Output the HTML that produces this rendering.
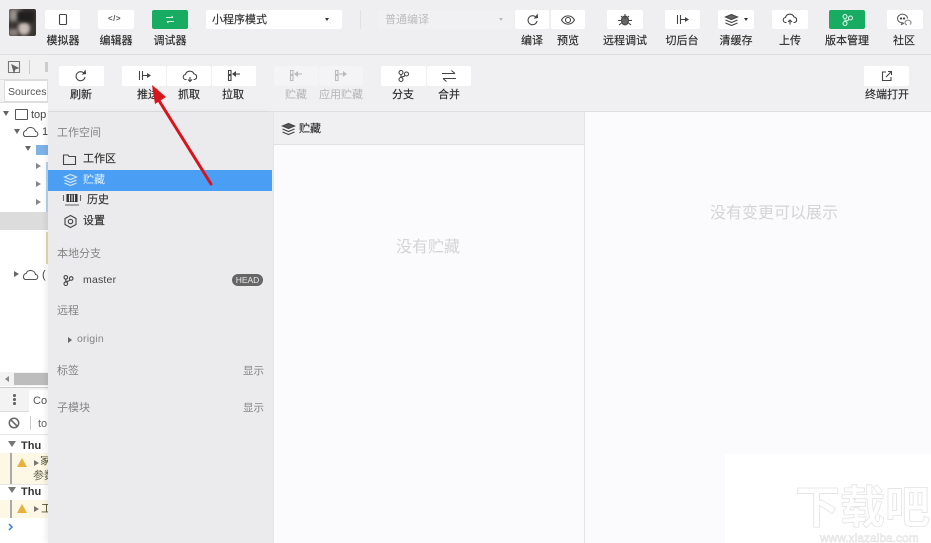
<!DOCTYPE html>
<html><head><meta charset="utf-8">
<style>
html,body{margin:0;padding:0;background:#fff}
#p{width:931px;height:543px;overflow:hidden;position:relative;background:#fff;font-family:"Liberation Sans","Noto Sans CJK SC",sans-serif;color:#333;filter:blur(.35px)}
.a{position:absolute}
.t{position:absolute;white-space:nowrap;line-height:14px;font-size:11px;text-align:center;transform:translateX(-50%);color:#2c2c2c;-webkit-text-stroke:.15px #2c2c2c}
.l{position:absolute;white-space:nowrap;line-height:14px;font-size:11px}
.b{position:absolute;background:#fff;border-radius:2px}
svg{position:absolute;overflow:visible}
svg *{fill:none;stroke:#444;stroke-width:1.1}
.g{color:#858585}
.d{-webkit-text-stroke:.15px #333}
</style></head><body><div id="p">
<!-- left devtools -->
<div class="a" style="left:0;top:54px;width:48px;height:489px;background:#fff"></div>
<div class="a" style="left:0;top:55px;width:48px;height:24px;background:#f1f1f2;border-bottom:1px solid #ddd"></div>
<svg style="left:8px;top:61px" width="12" height="12"><path d="M.5 .5h11v11h-11z" style="stroke:#777"/><path d="M4 4l6 3-3 1-1 3z" style="fill:#666;stroke:#666"/></svg>
<div class="a" style="left:29px;top:60px;width:1px;height:14px;background:#ccc"></div>
<div class="a" style="left:45px;top:62px;width:3px;height:10px;background:#ccc"></div>
<div class="a" style="left:0;top:80px;width:48px;height:22px;background:#f3f3f3;border-bottom:1px solid #ddd"></div>
<div class="a" style="left:4px;top:80px;width:44px;height:22px;background:#fff;border:1px solid #ddd;box-sizing:border-box"></div>
<div class="l" style="left:8px;top:85px;color:#555;font-size:10.5px">Sources</div>
<div class="a" style="left:3px;top:111px;border-left:3px solid transparent;border-right:3px solid transparent;border-top:5px solid #666"></div>
<div class="a" style="left:15px;top:109px;width:11px;height:9px;border:1.2px solid #555;border-radius:1px"></div>
<div class="l" style="left:31px;top:108px;color:#444">top</div>
<div class="a" style="left:14px;top:129px;border-left:3px solid transparent;border-right:3px solid transparent;border-top:5px solid #666"></div>
<svg style="left:22px;top:126px" width="16" height="11"><path d="M3 10.5h10a2.5 2.5 0 0 0 .5-5a5 5 0 0 0-9.500-1a3.300 3.300 0 0 0-1 6z" style="stroke:#555"/></svg>
<div class="l" style="left:42px;top:125px;color:#444">1</div>
<div class="a" style="left:25px;top:146px;border-left:3px solid transparent;border-right:3px solid transparent;border-top:5px solid #666"></div>
<div class="a" style="left:36px;top:145px;width:12px;height:10px;background:#7fb2e5"></div>
<div class="a" style="left:36px;top:163px;border-top:3px solid transparent;border-bottom:3px solid transparent;border-left:5px solid #888"></div>
<div class="a" style="left:36px;top:181px;border-top:3px solid transparent;border-bottom:3px solid transparent;border-left:5px solid #888"></div>
<div class="a" style="left:36px;top:199px;border-top:3px solid transparent;border-bottom:3px solid transparent;border-left:5px solid #888"></div>
<div class="a" style="left:46px;top:162px;width:2px;height:50px;background:#b9d3ee"></div>
<div class="a" style="left:0;top:212px;width:48px;height:18px;background:#dcdcdc"></div>
<div class="a" style="left:46px;top:232px;width:2px;height:32px;background:#e8d9a8"></div>
<div class="a" style="left:14px;top:271px;border-top:3px solid transparent;border-bottom:3px solid transparent;border-left:5px solid #666"></div>
<svg style="left:22px;top:269px" width="16" height="11"><path d="M3 10.500h10a2.500 2.500 0 0 0 .5-5a5 5 0 0 0-9.500-1a3.300 3.300 0 0 0-1 6z" style="stroke:#555"/></svg>
<div class="l" style="left:42px;top:268px;color:#444">(</div>
<div class="a" style="left:0;top:372px;width:48px;height:14px;background:#f3f3f3"></div>
<div class="a" style="left:5px;top:376px;border-top:3px solid transparent;border-bottom:3px solid transparent;border-right:4px solid #888"></div>
<div class="a" style="left:14px;top:373px;width:34px;height:12px;background:#bdbdbd"></div>
<div class="a" style="left:0;top:387px;width:48px;height:25px;background:#f3f3f3;border-top:1px solid #ccc;border-bottom:1px solid #ddd;box-sizing:border-box"></div>
<div class="a" style="left:13px;top:394px;width:2.500px;height:2.500px;background:#666;box-shadow:0 4px #666,0 8px #666;border-radius:50%"></div>
<div class="a" style="left:29px;top:390px;width:19px;height:22px;background:#fff"></div>
<div class="l" style="left:33px;top:394px;color:#555">Co</div>
<svg style="left:8px;top:417px" width="12" height="12"><circle cx="6" cy="6" r="4.700" style="stroke:#666;stroke-width:1.500"/><path d="M2.700 2.700l6.600 6.600" style="stroke:#666;stroke-width:1.500"/></svg>
<div class="a" style="left:30px;top:416px;width:1px;height:14px;background:#ccc"></div>
<div class="l" style="left:38px;top:417px;color:#666">to</div>
<div class="a" style="left:0;top:434px;width:48px;height:1px;background:#e6e6e6"></div>
<div class="a" style="left:8px;top:441px;border-left:4px solid transparent;border-right:4px solid transparent;border-top:6px solid #777"></div>
<div class="l" style="left:21px;top:439px;font-weight:bold;color:#333">Thu</div>
<div class="a" style="left:0;top:453px;width:48px;height:31px;background:#fdf8e6"></div>
<div class="a" style="left:10px;top:453px;width:1.500px;height:31px;background:#aaa"></div>
<div class="a" style="left:17px;top:458px;border-left:5px solid transparent;border-right:5px solid transparent;border-bottom:9px solid #e6b23c"></div>
<div class="a" style="left:34px;top:460px;border-top:3px solid transparent;border-bottom:3px solid transparent;border-left:5px solid #777"></div>
<div class="a" style="left:40px;top:456px;width:8px;height:11px;overflow:hidden"><div class="l" style="left:0;top:-2px;color:#553">家</div></div>
<div class="l" style="left:33px;top:469px;color:#665;font-size:11px;width:15px;overflow:hidden">参数</div>
<div class="a" style="left:0;top:484px;width:48px;height:1px;background:#e6e6e6"></div>
<div class="a" style="left:8px;top:487px;border-left:4px solid transparent;border-right:4px solid transparent;border-top:6px solid #777"></div>
<div class="l" style="left:21px;top:485px;font-weight:bold;color:#333">Thu</div>
<div class="a" style="left:0;top:500px;width:48px;height:18px;background:#fdf8e6"></div>
<div class="a" style="left:10px;top:500px;width:1.500px;height:18px;background:#aaa"></div>
<div class="a" style="left:17px;top:504px;border-left:5px solid transparent;border-right:5px solid transparent;border-bottom:9px solid #e6b23c"></div>
<div class="a" style="left:34px;top:506px;border-top:3px solid transparent;border-bottom:3px solid transparent;border-left:5px solid #777"></div>
<div class="l" style="left:41px;top:502px;color:#553;width:7px;overflow:hidden">工</div>
<svg style="left:8px;top:523px" width="6" height="8"><path d="M1 1l3 3-3 3" style="stroke:#3b7fd4;stroke-width:1.500"/></svg>

<!-- top bar -->
<div class="a" style="left:0;top:0;width:931px;height:54px;background:#efeef0;border-bottom:1px solid #dedde0"></div>
<div class="a" style="left:9px;top:9px;width:27px;height:27px;border-radius:2px;overflow:hidden;background:#3a3634">
  <div class="a" style="left:0;top:0;width:12px;height:12px;background:#9a9490;filter:blur(2px)"></div>
  <div class="a" style="left:9px;top:13px;width:12px;height:13px;background:#c8bcb6;border-radius:50%;filter:blur(1.500px)"></div>
  <div class="a" style="left:0;top:20px;width:9px;height:7px;background:#8a8280;filter:blur(1.500px)"></div>
  <div class="a" style="left:8px;top:2px;width:17px;height:11px;background:#211f1e;filter:blur(1.500px)"></div>
</div>

<div class="b" style="left:45px;top:10px;width:35px;height:19px"></div>
<svg style="left:59px;top:14px" width="8" height="11"><rect x=".5" y=".5" width="7" height="10" rx="1"/></svg>
<div class="t" style="left:63px;top:34px">模拟器</div>
<div class="b" style="left:98px;top:10px;width:36px;height:19px"></div>
<div class="l" style="left:108px;top:12px;font-size:8px;font-weight:bold;color:#555;letter-spacing:.5px">&lt;/&gt;</div>
<div class="t" style="left:116px;top:34px">编辑器</div>
<div class="b" style="left:152px;top:10px;width:36px;height:19px;background:#18ac62"></div>
<svg style="left:166px;top:16px" width="8" height="7"><path d="M0 1.500h7M5.500 0l1.500 1.500M8 5.500h-7M2.500 7l-1.500-1.500" style="stroke:#cfeedd"/></svg>
<div class="t" style="left:170px;top:34px">调试器</div>

<div class="b" style="left:206px;top:10px;width:136px;height:19px"></div>
<div class="l d" style="left:212px;top:13px;color:#333">小程序模式</div>
<div class="a" style="left:325px;top:18px;border-left:2.500px solid transparent;border-right:2.500px solid transparent;border-top:3px solid #333"></div>
<div class="a" style="left:360px;top:10px;width:1px;height:19px;background:#e2e1e4"></div>
<div class="b" style="left:378px;top:10px;width:136px;height:19px;background:#f1f0f2"></div>
<div class="l" style="left:385px;top:13px;color:#bcbcbe">普通编译</div>
<div class="a" style="left:499px;top:18px;border-left:2.500px solid transparent;border-right:2.500px solid transparent;border-top:3px solid #bbb"></div>

<div class="b" style="left:515px;top:10px;width:34px;height:19px"></div>
<svg style="left:527px;top:14px" width="11" height="11"><path d="M9.500 4a4.500 4.500 0 1 0 .5 3"/><path d="M8 4l2.500-.5-.3-2.500z" style="fill:#444;stroke:#444"/></svg>
<div class="t" style="left:532px;top:34px">编译</div>
<div class="b" style="left:551px;top:10px;width:34px;height:19px"></div>
<svg style="left:561px;top:15px" width="14" height="10"><path d="M.5 5c3-5.500 10-5.500 13 0c-3 5.500-10 5.500-13 0z"/><circle cx="7" cy="5" r="2.500"/></svg>
<div class="t" style="left:568px;top:34px">预览</div>

<div class="b" style="left:607px;top:10px;width:36px;height:19px"></div>
<svg style="left:618px;top:13px" width="14" height="13"><ellipse cx="7" cy="7.500" rx="3.500" ry="4.500" style="fill:#666"/><path d="M3 3l2 2M11 3l-2 2M0 7.500h3.500M10.500 7.500h3.500M1 12l2.500-2M13 12l-2.500-2M7 1v5"/></svg>
<div class="t" style="left:625px;top:34px">远程调试</div>
<div class="b" style="left:665px;top:10px;width:35px;height:19px"></div>
<svg style="left:677px;top:15px" width="12" height="9"><path d="M.5 0v9M3.500 0v9M3.500 4.500h5"/><path d="M8 2l4 2.500-4 2.500z" style="fill:#444;stroke:none"/></svg>
<div class="t" style="left:682px;top:34px">切后台</div>
<div class="b" style="left:718px;top:10px;width:36px;height:19px"></div>
<svg style="left:725px;top:14px" width="13" height="12"><path d="M6.500 .5l6 2.500-6 2.500-6-2.500z" style="fill:#666"/><path d="M.5 6l6 2.500 6-2.500M.5 9l6 2.500 6-2.500"/></svg>
<div class="a" style="left:744px;top:18px;border-left:2.500px solid transparent;border-right:2.500px solid transparent;border-top:3px solid #333"></div>
<div class="t" style="left:736px;top:34px">清缓存</div>
<div class="b" style="left:772px;top:10px;width:36px;height:19px"></div>
<svg style="left:783px;top:14px" width="14" height="11"><path d="M3.500 8.500h-.5a2.500 2.500 0 0 1-.5-5a4.500 4.500 0 0 1 8.500-.5a2.800 2.800 0 0 1 .5 5.500h-1"/><path d="M7 10.500v-4M5 8l2-2 2 2"/></svg>
<div class="t" style="left:790px;top:34px">上传</div>
<div class="b" style="left:829px;top:10px;width:36px;height:19px;background:#18ac62"></div>
<svg style="left:842px;top:14px" width="11" height="12"><circle cx="3" cy="2.500" r="2" style="stroke:#d8f3e4"/><circle cx="8.500" cy="4" r="2" style="stroke:#d8f3e4"/><circle cx="3" cy="9.500" r="2" style="stroke:#d8f3e4"/><path d="M3 4.500v3M3 7c3 0 3.500-1 4-2" style="stroke:#d8f3e4"/></svg>
<div class="t" style="left:847px;top:34px">版本管理</div>
<div class="b" style="left:887px;top:10px;width:36px;height:19px"></div>
<svg style="left:897px;top:14px" width="16" height="12"><path d="M10.500 4.500a5 4.300 0 1 0-5 4.300l-1.500 2 3-1.500" style="stroke:#666"/><circle cx="4" cy="4.500" r=".6"/><circle cx="7" cy="4.500" r=".6"/><path d="M10 11a3 2.500 0 1 1 3-.5" style="stroke:#888"/></svg>
<div class="t" style="left:904px;top:34px">社区</div>

<!-- second toolbar -->
<div class="a" style="left:48px;top:55px;width:883px;height:56px;background:#f0eff1;border-bottom:1px solid #e0dfe2"></div>
<div class="b" style="left:59px;top:66px;width:45px;height:20px"></div>
<svg style="left:75px;top:70px" width="11" height="11"><path d="M9.500 4a4.500 4.500 0 1 0 .5 3"/><path d="M8 4l2.500-.5-.3-2.500z" style="fill:#444;stroke:#444"/></svg>
<div class="t" style="left:81px;top:88px">刷新</div>
<div class="b" style="left:122px;top:66px;width:44px;height:20px"></div>
<svg style="left:139px;top:71px" width="12" height="9"><path d="M.5 0v9M3.500 0v9M3.500 4.500h5"/><path d="M8 2l4 2.500-4 2.500z" style="fill:#444;stroke:none"/></svg>
<div class="t" style="left:148px;top:88px">推送</div>
<div class="b" style="left:167px;top:66px;width:44px;height:20px"></div>
<svg style="left:183px;top:71px" width="14" height="11"><path d="M3.500 8.500h-.5a2.500 2.500 0 0 1-.5-5a4.500 4.500 0 0 1 8.500-.5a2.800 2.800 0 0 1 .5 5.500h-1"/><path d="M7 6v4.500M5 8.500l2 2 2-2"/></svg>
<div class="t" style="left:189px;top:88px">抓取</div>
<div class="b" style="left:212px;top:66px;width:44px;height:20px"></div>
<svg style="left:228px;top:70px" width="12" height="11"><rect x=".5" y=".5" width="2.500" height="4"/><rect x=".5" y="5.500" width="2.500" height="5"/><path d="M7 4h5"/><path d="M8 1l-4 3 4 3z" style="fill:#444;stroke:none"/></svg>
<div class="t" style="left:233px;top:88px">拉取</div>

<div class="b" style="left:274px;top:66px;width:44px;height:20px;background:#f4f3f5"></div>
<svg style="left:290px;top:70px" width="12" height="11"><rect x=".5" y=".5" width="2.500" height="4" style="stroke:#bbb"/><rect x=".5" y="5.500" width="2.500" height="5" style="stroke:#bbb"/><path d="M7 4h5" style="stroke:#bbb"/><path d="M8 1l-4 3 4 3z" style="fill:#bbb;stroke:none"/></svg>
<div class="t" style="left:296px;top:88px;color:#b4b4b6;-webkit-text-stroke:0">贮藏</div>
<div class="b" style="left:319px;top:66px;width:44px;height:20px;background:#f4f3f5"></div>
<svg style="left:335px;top:70px" width="12" height="11"><rect x=".5" y=".5" width="2.500" height="4" style="stroke:#bbb"/><rect x=".5" y="5.500" width="2.500" height="5" style="stroke:#bbb"/><path d="M4 4h4" style="stroke:#bbb"/><path d="M8 1l4 3-4 3z" style="fill:#bbb;stroke:none"/></svg>
<div class="t" style="left:341px;top:88px;color:#b4b4b6;-webkit-text-stroke:0">应用贮藏</div>

<div class="b" style="left:381px;top:66px;width:45px;height:20px"></div>
<svg style="left:398px;top:70px" width="11" height="12"><circle cx="3" cy="2.500" r="2"/><circle cx="8.500" cy="4" r="2"/><circle cx="3" cy="9.500" r="2"/><path d="M3 4.500v3M3 7c3 0 3.500-1 4-2"/></svg>
<div class="t" style="left:403px;top:88px">分支</div>
<div class="b" style="left:427px;top:66px;width:44px;height:20px"></div>
<svg style="left:442px;top:70px" width="14" height="12"><path d="M0 3.500h13M9.500 .5l3.500 3M14 8.500h-13M4.500 11.500l-3.500-3"/></svg>
<div class="t" style="left:449px;top:88px">合并</div>

<div class="b" style="left:864px;top:66px;width:45px;height:20px"></div>
<svg style="left:882px;top:71px" width="10" height="10"><path d="M4 1h-3.500v8.500h8.500v-3.500M4 6l5.500-5.500M6 .5h3.500v3.500"/></svg>
<div class="t" style="left:887px;top:88px">终端打开</div>

<!-- sidebar -->
<div class="a" style="left:48px;top:112px;width:225px;height:431px;background:#ebeaec;box-shadow:-3px 0 5px rgba(0,0,0,.06)"></div>
<div class="l g" style="left:57px;top:126px">工作空间</div>
<svg style="left:63px;top:154px" width="13" height="11"><path d="M.5 1h4.500l1 1.500h6.500v8h-12z"/></svg>
<div class="l d" style="left:83px;top:152px;color:#333">工作区</div>
<div class="a" style="left:48px;top:170px;width:224px;height:21px;background:#4a9ff5"></div>
<svg style="left:64px;top:174px" width="13" height="12"><path d="M6.500 .5l6 2.500-6 2.500-6-2.500z" style="stroke:#d7e9fb"/><path d="M.5 6l6 2.500 6-2.500M.5 9l6 2.500 6-2.500" style="stroke:#d7e9fb"/></svg>
<div class="l" style="left:83px;top:173px;color:#e6f2fd">贮藏</div>
<svg style="left:63px;top:194px" width="18" height="12"><path d="M.5 1v6M17.500 1v6M2 11h14" style="stroke:#666"/><path d="M4 .5h10v7h-10z" style="fill:#333;stroke:#333"/><path d="M6.500 .5v7M9 .5v7M11.500 .5v7" style="stroke:#ebeaec"/></svg>
<div class="l d" style="left:87px;top:193px;color:#333">历史</div>
<svg style="left:64px;top:215px" width="13" height="13"><path d="M6.500 .5l5.500 3v6l-5.500 3-5.500-3v-6z"/><circle cx="6.500" cy="6.500" r="2.200"/></svg>
<div class="l d" style="left:83px;top:214px;color:#333">设置</div>
<div class="l g" style="left:57px;top:247px">本地分支</div>
<svg style="left:63px;top:275px" width="11" height="11"><circle cx="2.800" cy="2.300" r="1.800"/><circle cx="8.200" cy="3.500" r="1.800"/><circle cx="2.800" cy="8.700" r="1.800"/><path d="M2.800 4v3M2.800 6.500c3 0 3.500-.8 4-1.500"/></svg>
<div class="l" style="left:83px;top:273px;color:#444;font-size:10.500px;letter-spacing:.2px">master</div>
<div class="a" style="left:232px;top:274px;width:31px;height:12px;border-radius:6px;background:#666;color:#e8e8e8;font-size:8.500px;line-height:12px;text-align:center">HEAD</div>
<div class="l g" style="left:57px;top:304px">远程</div>
<div class="a" style="left:68px;top:337px;border-top:3px solid transparent;border-bottom:3px solid transparent;border-left:4px solid #666"></div>
<div class="l" style="left:77px;top:332px;color:#858585;font-size:10.500px;letter-spacing:.2px">origin</div>
<div class="l g" style="left:57px;top:364px">标签</div>
<div class="l g" style="left:243px;top:364px;font-size:10.500px">显示</div>
<div class="l g" style="left:57px;top:401px">子模块</div>
<div class="l g" style="left:243px;top:401px;font-size:10.500px">显示</div>

<!-- middle -->
<div class="a" style="left:273px;top:112px;width:312px;height:431px;background:#fbfafc;border-left:1px solid #e4e3e6;border-right:1px solid #e4e3e6;box-sizing:border-box"></div>
<div class="a" style="left:274px;top:112px;width:310px;height:33px;background:#f0eff1;border-bottom:1px solid #e2e1e4;box-sizing:border-box"></div>
<svg style="left:282px;top:123px" width="13" height="12"><path d="M6.500 .5l6 2.500-6 2.500-6-2.500z" style="fill:#555"/><path d="M.5 6l6 2.500 6-2.500M.5 9l6 2.500 6-2.500"/></svg>
<div class="l d" style="left:299px;top:122px;color:#333">贮藏</div>
<div class="l" style="left:396px;top:238px;font-size:16px;line-height:20px;color:#d4d4d6">没有贮藏</div>
<!-- right -->
<div class="a" style="left:585px;top:112px;width:346px;height:431px;background:#fbfafc"></div>
<div class="l" style="left:710px;top:204px;font-size:16px;line-height:20px;color:#d4d4d6">没有变更可以展示</div>
<div class="a" style="left:725px;top:454px;width:206px;height:89px;background:#fff"></div>
<div class="l" style="left:795px;top:485px;font-size:45px;line-height:46px;font-weight:bold;color:#fff;-webkit-text-stroke:.8px #e4e4e4">下载吧</div>
<div class="l" style="left:820px;top:532px;font-size:12px;line-height:12px;color:#fff;-webkit-text-stroke:.5px #dcdcdc">www.xiazaiba.com</div>

<!-- red arrow -->
<svg style="left:0;top:0" width="931" height="543"><path d="M211 184L158 99" style="stroke:#d8141c;stroke-width:3;stroke-linecap:round"/><path d="M152 85L166 97 155 104z" style="fill:#d8141c;stroke:none"/></svg>
</div></body></html>
